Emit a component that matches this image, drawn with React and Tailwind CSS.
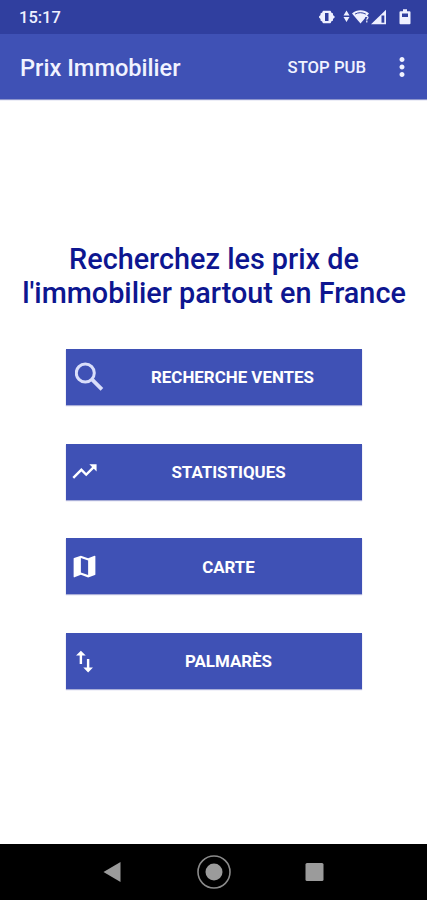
import { MdTrendingUp, MdMap, MdSwapVert, MdMoreVert } from "react-icons/md";

const SearchIcon = () => (
    <svg className="ml-[9px] h-[30px] w-[30px]" viewBox="0 0 30 30" fill="none" stroke="#d9defa">
        <circle cx="10.3" cy="11" r="9" strokeWidth="3" />
        <path d="M16.7 17.2L26.9 27.4" strokeWidth="3.8" />
    </svg>
);

const actions = [
    { label: "RECHERCHE VENTES", icon: <SearchIcon />, labelClass: "mr-0.5" },
    { label: "STATISTIQUES", icon: <MdTrendingUp size={29} className="ml-1" />, labelClass: "mr-1" },
    { label: "CARTE", icon: <MdMap size={29} className="ml-1" />, labelClass: "mr-1" },
    { label: "PALMARÈS", icon: <MdSwapVert size={29} className="ml-1" />, labelClass: "mr-1" }
];

function StatusBar() {
    return (
        <div className="flex h-[34px] items-center justify-between bg-[#303f9f] pl-[19px] pr-[14px] text-[#eef0ff]">
            <span className="pt-0.5 text-[16.5px] font-medium">15:17</span>
            <svg className="h-[18px] w-[94px]" viewBox="0 0 94 18" fill="currentColor">
                {/* vibrate */}
                <path d="M4.5 2.8h6.500q1 0 1 1v10.400q0 1-1 1H4.500q-1 0-1-1V3.800q0-1 1-1z" />
                <path d="M4 4L1.500 5.500V7L-.5 9l2 2v1.500L4 14zM11.500 4L14 5.500V7l2 2-2 2v1.500L11.500 14z" />
                <path d="M6 5h3.500v8H6z" fill="#303f9f" />
                {/* data arrows */}
                <path d="M27.500 2.500l3 5h-6zM27.500 14l3-5h-6z" />
                {/* wifi */}
                <path d="M33 5.400C37.900 1.300 45.100 1.300 50 5.400L41.500 15.500z" />
                <path d="M36 6.100c3.300-1.900 7.200-1.900 10.800 0" fill="none" stroke="#303f9f" strokeWidth="1" />
                <path d="M46 8.500h4v5.800h-4z" fill="#303f9f" />
                <path d="M46 9c.5-1 3-1 3 .5 0 1-1.200 1-1.200 2.200M47.800 12.500v2" fill="none" stroke="currentColor" strokeWidth="1.200" />
                {/* signal */}
                <path d="M67 1.700v14.600H52z" />
                <path d="M62.500 7.500h2.800v7.200h-2.800z" fill="#303f9f" />
                {/* battery */}
                <path d="M84 1.300h4v2H90.500q1 0 1 1v11q0 1-1 1h-9q-1 0-1-1v-11q0-1 1-1H84z" />
                <path d="M83 5.500h6v3.500h-6z" fill="#303f9f" />
            </svg>
        </div>
    );
}

function AppBar() {
    return (
        <header className="flex h-[65px] items-center bg-[#3f51b5] pl-5 pr-2.5 text-[#f1f3ff] shadow-[0_1px_1px_#8d95cc]">
            <h1 className="pt-1 text-[23.6px] font-medium">Prix Immobilier</h1>
            <button className="ml-auto mr-[21px] pt-[3px] text-[16.7px] font-medium">STOP PUB</button>
            <MdMoreVert size={30} />
        </header>
    );
}

function NavBar() {
    return (
        <nav className="flex h-14 items-center justify-center bg-black">
            <svg className="h-9 w-[224px]" viewBox="0.5 0 224 36" fill="#9b9b9b">
                <path d="M2 18L19 8v20z" />
                <circle cx="112.5" cy="18" r="8.5" />
                <circle cx="112.5" cy="18" r="16" fill="none" stroke="#8b8b8b" strokeWidth="1.6" />
                <rect x="204" y="9" width="18" height="18" rx="1.5" />
            </svg>
        </nav>
    );
}

export default function App() {
    return (
        <div className="flex h-[900px] w-[427px] flex-col bg-white font-['Roboto',sans-serif]">
            <StatusBar />
            <AppBar />
            <main className="flex flex-1 flex-col items-center pt-[143px]">
                <h2 className="ml-px text-center text-[28.8px] font-medium leading-[34px] whitespace-nowrap text-[#0d1690]">
                    Recherchez les prix de
                    <br />
                    l'immobilier partout en France
                </h2>
                <div className="mt-[39px] ml-px flex w-[296px] flex-col gap-[38.7px]">
                    {actions.map(action => (
                        <button
                            key={action.label}
                            className="flex h-14 items-center bg-[#3f51b5] text-white shadow-[0_1px_1px_#a9aed8]"
                        >
                            {action.icon}
                            <span className={`${action.labelClass} flex-1 pt-0.5 text-center text-[16.9px] font-bold`}>
                                {action.label}
                            </span>
                        </button>
                    ))}
                </div>
            </main>
            <NavBar />
        </div>
    );
}
